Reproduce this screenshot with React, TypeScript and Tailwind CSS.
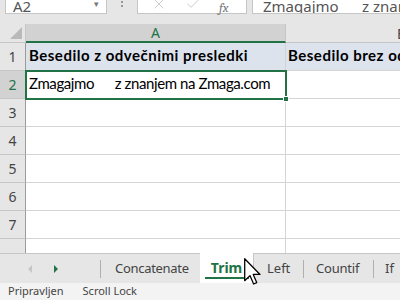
import { X, Check } from 'lucide-react'

const ui = { fontFamily: '"Noto Sans", "Open Sans", sans-serif' }
const cell = { fontFamily: 'Lato, "Liberation Sans", sans-serif' }

function RowHead({ n, active }: { n: number; active?: boolean }) {
  return (
    <div
      className={`w-[26px] shrink-0 border-r border-b flex items-end justify-center pb-[3px] text-[14px] ${
        active ? 'bg-[#d2d2d2] text-[#217346] border-r-[#9b9b9b] border-b-[#c6c6c6]' : 'bg-[#e6e6e6] text-[#444] border-r-[#9b9b9b] border-b-[#c6c6c6]'
      }`}
      style={ui}
    >
      {n}
    </div>
  )
}

function EmptyRow({ n, h = 'h-[28px]' }: { n: number; h?: string }) {
  return (
    <div className={`flex ${h}`}>
      <RowHead n={n} />
      <div className="w-[260px] shrink-0 border-r border-b border-[#d4d4d4] bg-white" />
      <div className="flex-1 border-b border-[#d4d4d4] bg-white" />
    </div>
  )
}

function Cursor() {
  return (
    <svg className="absolute left-[244px] top-[258px]" width="17" height="27" viewBox="0 0 12 19">
      <path d="M0.5 0.5 L0.5 16 L4.2 12.4 L6.8 18.3 L9 17.3 L6.5 11.6 L11.3 11.6 Z" fill="white" stroke="black" strokeWidth="0.9" strokeLinejoin="round" />
    </svg>
  )
}

export default function App() {
  return (
    <div className="relative w-[400px] h-[300px] overflow-hidden bg-[#e6e6e6] select-none">
      {/* formula bar */}
      <div className="flex h-[24px] items-start text-[15px] text-[#444]" style={ui}>
        <div className="ml-[5px] w-[102px] h-[14px] bg-white border-x border-b border-[#c6c6c6] flex items-end justify-between px-[7px]">
          <span className="leading-none -mb-[1px] text-[#555]">A2</span>
          <span className="text-[9px] text-[#777] mb-[3px]">▾</span>
        </div>
        <div className="w-[30px] flex flex-col items-center gap-[2px] pt-[1px]">
          <span className="w-[2px] h-[2px] bg-[#999]" />
          <span className="w-[2px] h-[2px] bg-[#999]" />
        </div>
        <div className="w-[110px] h-[14px] bg-white border-x border-b border-[#c6c6c6] flex items-end pb-[1px] pl-[13px] gap-[18px] text-[#c4c4c4]">
          <X className="w-[16px] h-[16px]" strokeWidth={1.3} />
          <Check className="w-[16px] h-[16px]" strokeWidth={1.3} />
          <span className="italic font-serif text-[13px] leading-none text-[#777] -mb-[2px]">fx</span>
        </div>
        <div className="ml-[5px] flex-1 h-[14px] bg-white border-l border-b border-[#c6c6c6] flex items-end pl-[10px] whitespace-pre overflow-hidden">
          <span className="leading-none -mb-[1px] text-[#555]">Zmagajmo      z znanjem</span>
        </div>
      </div>

      {/* column headers */}
      <div className="flex h-[19px]">
        <div className="relative w-[26px] shrink-0 bg-[#e6e6e6] border-r border-b border-[#c6c6c6]">
          <div className="absolute right-[3px] bottom-[3px] w-0 h-0 border-l-[12px] border-l-transparent border-b-[12px] border-b-[#b9b9b9]" />
        </div>
        <div className="w-[260px] shrink-0 bg-[#d2d2d2] border-r border-[#c6c6c6] border-b-2 border-b-[#217346] flex items-center justify-center text-[14px] text-[#217346]" style={ui}>
          A
        </div>
        <div className="flex-1 bg-[#e6e6e6] border-b border-[#c6c6c6] flex items-center justify-end overflow-hidden text-[14px] text-[#444]" style={ui}>
          <span className="-mr-[6px]">B</span>
        </div>
      </div>

      {/* rows */}
      <div className="flex h-[28px]">
        <RowHead n={1} />
        <div className="w-[260px] shrink-0 border-r border-b border-[#d4d4d4] bg-[#dce3ed] flex items-end pb-[4px] pl-[3px] font-bold text-[15px] tracking-[0.5px] text-black whitespace-nowrap overflow-hidden" style={cell}>
          Besedilo z odvečnimi presledki
        </div>
        <div className="flex-1 border-b border-[#d4d4d4] bg-[#dce3ed] flex items-end pb-[4px] pl-[2px] font-bold text-[15px] tracking-[0.5px] text-black whitespace-nowrap overflow-hidden" style={cell}>
          Besedilo brez odvečnih presledkov
        </div>
      </div>
      <div className="flex h-[28px]">
        <RowHead n={2} active />
        <div className="relative w-[260px] shrink-0 border-r border-b border-[#d4d4d4] bg-white flex items-end pb-[4px] pl-[3px] text-[15px] tracking-[-0.4px] text-black whitespace-pre" style={cell}>
          Zmagajmo      z znanjem na Zmaga.com
          <div className="absolute -left-[1px] -top-[1px] -right-[2px] -bottom-[2px] border-2 border-[#217346]" />
          <div className="absolute -right-[4px] -bottom-[4px] w-[6px] h-[6px] bg-[#217346] border border-white" />
        </div>
        <div className="flex-1 border-b border-[#d4d4d4] bg-white" />
      </div>
      <EmptyRow n={3} />
      <EmptyRow n={4} />
      <EmptyRow n={5} />
      <EmptyRow n={6} />
      <EmptyRow n={7} />
      <div className="flex h-[14px]">
        <div className="w-[26px] shrink-0 bg-[#e6e6e6] border-r border-[#9b9b9b]" />
        <div className="w-[260px] shrink-0 border-r border-[#d4d4d4] bg-white" />
        <div className="flex-1 bg-white" />
      </div>

      {/* sheet tabs */}
      <div className="flex h-[30px] text-[13px] text-[#444]" style={ui}>
        <div className="w-[100px] shrink-0 border-t border-[#c6c6c6] flex items-center gap-[22px] pl-[28px]">
          <span className="w-0 h-0 border-y-[4px] border-y-transparent border-r-[4px] border-r-[#c6c6c6]" />
          <span className="w-0 h-0 border-y-[4px] border-y-transparent border-l-[4px] border-l-[#217346]" />
        </div>
        <div className="w-[100px] shrink-0 border-t border-[#c6c6c6] flex items-center">
          <span className="w-px h-[18px] bg-[#b0b0b0]" />
          <span className="pl-[14px] tracking-[-0.3px]">Concatenate</span>
        </div>
        <div className="w-[53px] shrink-0 bg-white flex flex-col items-center">
          <span className="mt-[6px] font-bold text-[14px] text-[#217346] leading-[17px]">Trim</span>
          <span className="mt-[1px] w-[44px] h-[2px] bg-[#217346]" />
        </div>
        <div className="w-[50px] shrink-0 border-t border-l border-[#c6c6c6] flex items-center pl-[13px]">Left</div>
        <div className="w-[70px] shrink-0 border-t border-[#c6c6c6] flex items-center">
          <span className="w-px h-[18px] bg-[#b0b0b0]" />
          <span className="pl-[12px] tracking-[-0.2px]">Countif</span>
        </div>
        <div className="flex-1 border-t border-[#c6c6c6] flex items-center">
          <span className="w-px h-[18px] bg-[#b0b0b0]" />
          <span className="pl-[11px]">If</span>
        </div>
      </div>

      {/* status bar */}
      <div className="flex h-[17px] items-center gap-[19px] pl-[8px] bg-[#f3f3f3] text-[11px] text-[#444]" style={ui}>
        <span>Pripravljen</span>
        <span>Scroll Lock</span>
      </div>

      <Cursor />
    </div>
  )
}
